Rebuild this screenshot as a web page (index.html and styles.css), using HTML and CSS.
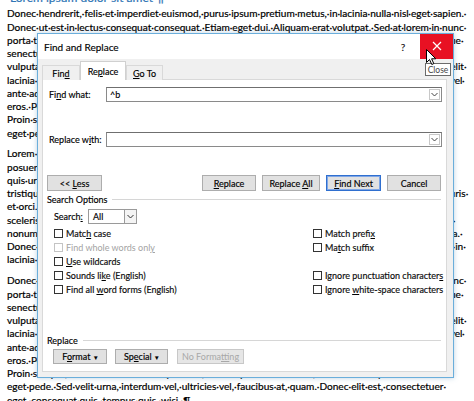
FILE: index.html
```html
<!DOCTYPE html>
<html>
<head>
<meta charset="utf-8">
<link rel="stylesheet" href="styles.css">
</head>
<body>
<div class="doc">
  <div class="heading">Lorem·ipsum·dolor·sit·amet ¶</div>
  <div class="para">
    <div class="ln">Donec·hendrerit,·felis·et·imperdiet·euismod,·purus·ipsum·pretium·metus,·in·lacinia·nulla·nisl·eget·sapien.·</div>
    <div class="ln">Donec·ut·est·in·lectus·consequat·consequat.·Etiam·eget·dui.·Aliquam·erat·volutpat.·Sed·at·lorem·in·nunc·</div>
    <div class="ln">porta·tristique.·Proin·nec·augue.·Quisque·aliquam·tempor·magna.·Pellentesque·habitant·morbi·tristique·</div>
    <div class="ln">senectus·et·netus·et·malesuada·fames·ac·turpis·egestas.·Nunc·ac·magna.·Maecenas·odio·dolor,·</div>
    <div class="ln">vulputate·vel,·auctor·ac,·accumsan·id,·felis.·Pellentesque·cursus·sagittis·felis.·Pellentesque·porttitor,·velit·</div>
    <div class="ln">lacinia·egestas·auctor,·diam·eros·tempus·arcu,·nec·vulputate·augue·magna·vel·risus.·Cras·non·magna·vel·</div>
    <div class="ln">ante·adipiscing·rhoncus.·Vivamus·a·mi.·Morbi·neque.·Aliquam·erat·volutpat.·Integer·ultrices·lobortis·</div>
    <div class="ln">eros.·Pellentesque·habitant·morbi·tristique·senectus·et·netus·et·malesuada·fames·ac·turpis·egestas.·</div>
    <div class="ln">Proin·semper,·ante·vitae·sollicitudin·posuere,·metus·quam·iaculis·nibh,·vitae·scelerisque·nunc·massa·</div>
    <div class="ln">eget·pede.·Sed·velit·urna,·interdum·vel,·ultricies·vel,·faucibus·at,·quam.·¶</div>
  </div>
  <div class="para">
    <div class="ln">Lorem·ipsum·dolor·sit·amet,·consectetuer·adipiscing·elit.·Maecenas·porttitor·congue·massa.·Fusce·</div>
    <div class="ln">posuere,·magna·sed·pulvinar·ultricies,·purus·lectus·malesuada·libero,·sit·amet·commodo·magna·eros·</div>
    <div class="ln">quis·urna.·Nunc·viverra·imperdiet·enim.·Fusce·est.·Vivamus·a·tellus.·Pellentesque·habitant·morbi·</div>
    <div class="ln">tristique·senectus·et·netus·et·malesuada·fames·ac·turpis·egestas.·Proin·pharetra·nonummy·pede.·Mauris·</div>
    <div class="ln">et·orci.·Aenean·nec·lorem.·In·porttitor.·Donec·laoreet·nonummy·augue.·Suspendisse·dui·purus,·</div>
    <div class="ln">scelerisque·at,·vulputate·vitae,·pretium·mattis,·nunc.·Mauris·eget·neque·at·sem·venenatis·eleifend.·Ut·</div>
    <div class="ln">nonummy.·Fusce·aliquet·pede·non·pede.·Suspendisse·dapibus·lorem·pellentesque·magna.·Integer·nulla.·</div>
    <div class="ln">Donec·blandit·feugiat·ligula.·Donec·hendrerit,·felis·et·imperdiet·euismod,·purus·ipsum·pretium·metus,·in·</div>
    <div class="ln">lacinia·nulla·nisl·eget·sapien.·¶</div>
  </div>
  <div class="para">
    <div class="ln">Donec·ut·est·in·lectus·consequat·consequat.·Etiam·eget·dui.·Aliquam·erat·volutpat.·Sed·at·lorem·in·nunc·</div>
    <div class="ln">porta·tristique.·Proin·nec·augue.·Quisque·aliquam·tempor·magna.·Pellentesque·habitant·morbi·tristique·</div>
    <div class="ln">senectus·et·netus·et·malesuada·fames·ac·turpis·egestas.·Nunc·ac·magna.·Maecenas·odio·dolor,·</div>
    <div class="ln">vulputate·vel,·auctor·ac,·accumsan·id,·felis.·Pellentesque·cursus·sagittis·felis.·Pellentesque·porttitor,·velit·</div>
    <div class="ln">lacinia·egestas·auctor,·diam·eros·tempus·arcu,·nec·vulputate·augue·magna·vel·risus.·Cras·non·magna·vel·</div>
    <div class="ln">ante·adipiscing·rhoncus.·Vivamus·a·mi.·Morbi·neque.·Aliquam·erat·volutpat.·Integer·ultrices·lobortis·</div>
    <div class="ln">eros.·Pellentesque·habitant·morbi·tristique·senectus·et·netus·et·malesuada·fames·ac·turpis·egestas.·</div>
    <div class="ln">Proin·semper,·ante·vitae·sollicitudin·posuere,·metus·quam·iaculis·nibh,·vitae·scelerisque·nunc·massa·</div>
    <div class="ln">eget·pede.·Sed·velit·urna,·interdum·vel,·ultricies·vel,·faucibus·at,·quam.·Donec·elit·est,·consectetuer·</div>
    <div class="ln">eget,·consequat·quis,·tempus·quis,·wisi.·¶</div>
  </div>
</div>

<div class="dialog">
  <div class="titlebar">
    <span class="title">Find and Replace</span>
    <span class="help">?</span>
    <span class="close"><svg width="10" height="10" viewBox="0 0 10 10"><path d="M1 1L9 9M9 1L1 9" stroke="#fff" stroke-width="1.2" fill="none"/></svg></span>
  </div>
  <div class="tabs">
    <div class="tab"><span>Fin<u>d</u></span></div>
    <div class="tab active"><span>Re<u>p</u>lace</span></div>
    <div class="tab"><span><u>G</u>o To</span></div>
  </div>
  <div class="panel">
    <div class="field-row">
      <span class="flabel">Fi<u>n</u>d what:</span>
      <div class="combo"><span class="val">^b</span><span class="drop"><svg width="7" height="5" viewBox="0 0 7 5"><path d="M0.5 1L3.5 4L6.5 1" stroke="#444" stroke-width="1" fill="none"/></svg></span></div>
    </div>
    <div class="field-row second">
      <span class="flabel">Replace w<u>i</u>th:</span>
      <div class="combo"><span class="val"></span><span class="drop"><svg width="7" height="5" viewBox="0 0 7 5"><path d="M0.5 1L3.5 4L6.5 1" stroke="#444" stroke-width="1" fill="none"/></svg></span></div>
    </div>
    <div class="btn-row">
      <span class="btn w-less"><span>&lt;&lt; <u>L</u>ess</span></span>
      <span class="spacer"></span>
      <span class="btn w-rep"><span><u>R</u>eplace</span></span>
      <span class="btn w-all"><span>Replace <u>A</u>ll</span></span>
      <span class="btn w-next default"><span><u>F</u>ind Next</span></span>
      <span class="btn w-cancel"><span>Cancel</span></span>
    </div>
    <div class="group-head"><span>Search Options</span><span class="rule"></span></div>
    <div class="search-row">
      <span class="slabel">Search<u>:</u></span>
      <div class="select"><span class="val">All</span><span class="sdrop"><svg width="7" height="5" viewBox="0 0 7 5"><path d="M0.5 1L3.5 4L6.5 1" stroke="#333" stroke-width="1" fill="none"/></svg></span></div>
    </div>
    <div class="checks">
      <div class="chk"><span class="box"></span><span>Matc<u>h</u> case</span></div>
      <div class="chk"><span class="box"></span><span>Match prefi<u>x</u></span></div>
      <div class="chk off"><span class="box"></span><span>Find whole words onl<u>y</u></span></div>
      <div class="chk"><span class="box"></span><span>Ma<u>t</u>ch suffix</span></div>
      <div class="chk"><span class="box"></span><span><u>U</u>se wildcards</span></div>
      <div class="chk"></div>
      <div class="chk"><span class="box"></span><span>Sounds li<u>k</u>e (English)</span></div>
      <div class="chk"><span class="box"></span><span>Ignore punctuation character<u>s</u></span></div>
      <div class="chk"><span class="box"></span><span>Find all <u>w</u>ord forms (English)</span></div>
      <div class="chk"><span class="box"></span><span>Ignore <u>w</u>hite-space characters</span></div>
    </div>
    <div class="group-head replace-head"><span>Replace</span><span class="rule"></span></div>
    <div class="btn-row bottom">
      <span class="btn w-fmt"><span>F<u>o</u>rmat <span class="caret">▾</span></span></span>
      <span class="btn w-spec"><span>Sp<u>e</u>cial <span class="caret">▾</span></span></span>
      <span class="btn w-nofmt disabled"><span>No Forma<u>t</u>ting</span></span>
    </div>
  </div>
</div>

<div class="tooltip">Close</div>
<svg class="cursor" width="11" height="17" viewBox="0 0 11 17"><path d="M0.5 0.5L0.5 13.5L3.5 10.5L5.8 15.5L7.8 14.6L5.6 9.8L9.8 9.8Z" fill="#fff" stroke="#000" stroke-width="1"/></svg>
</body>
</html>
```
FILE: styles.css
```css
html, body {
  margin: 0;
  padding: 0;
  background: #fff;
  width: 474px;
  height: 401px;
  overflow: hidden;
}

.doc {
  padding-left: 7px;
  font-family: Lato, "Liberation Sans", sans-serif;
  font-size: 10.1px;
  color: #000;
  -webkit-text-stroke: 0.2px #000;
}

.heading {
  margin-top: -9.4px;
  margin-bottom: 3.6px;
  line-height: 13.2px;
  height: 13.2px;
  color: #2e74b5;
  -webkit-text-stroke: 0.2px #2e74b5;
  font-size: 12px;
  padding-left: 3px;
}

.para {
  margin-bottom: 7.6px;
}

.ln {
  white-space: nowrap;
  line-height: 13.25px;
  height: 13.25px;
}

/* dialog */
.dialog {
  position: absolute;
  left: 37px;
  top: 33px;
  width: 417px;
  height: 345px;
  box-sizing: border-box;
  border: 1px solid #6aaedb;
  background: #f0f0f0;
  box-shadow: 0 0 5px rgba(60, 120, 170, 0.35);
  font-family: Lato, "Liberation Sans", sans-serif;
  font-size: 9px;
  color: #000;
  -webkit-text-stroke: 0.15px #000;
  display: flex;
  flex-direction: column;
}

.titlebar {
  height: 25px;
  background: #fff;
  display: flex;
  align-items: center;
}

.title {
  padding-left: 6px;
  font-size: 10px;
  flex: 1;
}

.help {
  width: 30px;
  text-align: center;
  font-size: 10px;
  color: #222;
  margin-right: 2px;
}

.close {
  width: 33px;
  height: 25px;
  margin-top: -1px;
  background: #e81123;
  display: flex;
  align-items: center;
  justify-content: center;
}

.tabs {
  height: 20px;
  display: flex;
  align-items: flex-end;
  padding-left: 4px;
}

.tab {
  height: 15px;
  box-sizing: border-box;
  border: 1px solid #d9d9d9;
  border-bottom: none;
  background: #f0f0f0;
  display: flex;
  align-items: center;
  justify-content: center;
  margin-bottom: -1px;
  position: relative;
}

.tab:nth-child(1) { width: 38px; }
.tab:nth-child(2) { width: 46px; }
.tab:nth-child(3) { width: 37px; }

.tab.active {
  height: 19px;
  background: #fff;
  z-index: 1;
  border-color: #d0d0d0;
}

.panel {
  flex: 1;
  margin: 0 6px 5px 4px;
  border: 1px solid #d9d9d9;
  background: #fff;
  padding: 7px 4px 0 4px;
  display: flex;
  flex-direction: column;
}

.field-row {
  display: flex;
  align-items: center;
  height: 15px;
}

.field-row.second {
  margin-top: 30px;
}

.flabel {
  width: 57px;
  padding-left: 2px;
}

.combo {
  flex: 1;
  height: 15px;
  box-sizing: border-box;
  border: 1px solid #8a8a8a;
  border-top-color: #6f6f6f;
  background: #fff;
  display: flex;
  align-items: center;
}

.combo .val {
  flex: 1;
  padding-left: 3px;
}

.drop {
  width: 11px;
  height: 11px;
  margin-right: 1px;
  box-sizing: border-box;
  border: 1px solid #c8c8c8;
  display: flex;
  align-items: center;
  justify-content: center;
}

.btn-row {
  display: flex;
  align-items: center;
  margin-top: 28px;
  height: 16px;
}

.spacer { flex: 1; }

.btn {
  height: 16px;
  box-sizing: border-box;
  border: 1px solid #adadad;
  background: #e1e1e1;
  display: flex;
  align-items: center;
  justify-content: center;
  white-space: nowrap;
}

.w-less { width: 55px; }
.w-rep { width: 54px; }
.w-all { width: 58px; margin-left: 6px; }
.w-next { width: 55px; margin-left: 6px; }
.w-cancel { width: 54px; margin-left: 6px; margin-right: 1px; }

.btn.default {
  border: 1px solid #2f6fcf;
  box-shadow: inset 0 0 0 1px #7fa6e6;
}

.group-head {
  display: flex;
  align-items: center;
  height: 12px;
  margin-top: 2px;
  margin-right: 1px;
}

.group-head .rule {
  flex: 1;
  height: 1px;
  background: #d6d6d6;
  margin-left: 5px;
}

.search-row {
  display: flex;
  align-items: center;
  height: 15px;
  margin-top: 4px;
  padding-left: 7px;
}

.slabel {
  width: 34px;
}

.select {
  width: 49px;
  height: 15px;
  box-sizing: border-box;
  border: 1px solid #9a9a9a;
  display: flex;
  align-items: center;
}

.select .val {
  flex: 1;
  padding-left: 4px;
}

.sdrop {
  width: 12px;
  height: 13px;
  box-sizing: border-box;
  border-left: 1px solid #9a9a9a;
  background: #f4f4f4;
  display: flex;
  align-items: center;
  justify-content: center;
}

.checks {
  display: grid;
  grid-template-columns: 259px 1fr;
  grid-auto-rows: 14px;
  margin-top: 2px;
  padding-left: 7px;
}

.chk {
  display: flex;
  align-items: center;
  white-space: nowrap;
  color: #111;
}

.chk .box {
  width: 9px;
  height: 9px;
  box-sizing: border-box;
  border: 1px solid #333;
  background: #fff;
  margin-right: 3px;
  flex: none;
}

.chk.off {
  color: #a3a3a3;
  -webkit-text-stroke: 0;
}

.chk.off .box {
  border-color: #c4c4c4;
}

.replace-head {
  margin-top: 38px;
}

.btn-row.bottom {
  margin-top: 3px;
  height: 15px;
  padding-left: 6px;
}

.bottom .btn {
  height: 15px;
}

.w-fmt { width: 54px; }
.w-spec { width: 53px; margin-left: 8px; }
.w-nofmt { width: 67px; margin-left: 9px; }

.caret {
  font-size: 7px;
  margin-left: 1px;
}

.btn.disabled {
  color: #a8a8a8;
  border-color: #c8c8c8;
  background: #e6e6e6;
  -webkit-text-stroke: 0;
}

.tooltip {
  position: absolute;
  left: 425px;
  top: 63px;
  width: 26px;
  height: 13px;
  box-sizing: border-box;
  border: 1px solid #6b6b6b;
  background: #fff;
  font-family: Lato, "Liberation Sans", sans-serif;
  font-size: 8.5px;
  color: #444;
  display: flex;
  align-items: center;
  justify-content: center;
}

.cursor {
  position: absolute;
  left: 426px;
  top: 49px;
}
```
